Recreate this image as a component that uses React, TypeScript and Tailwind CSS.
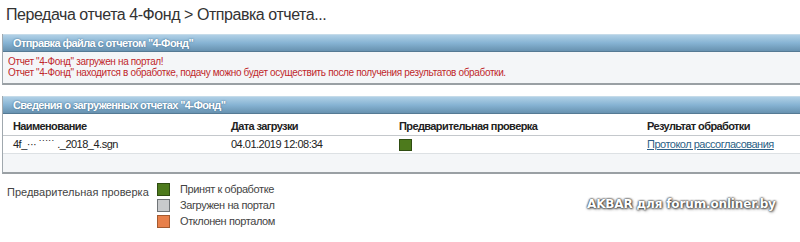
import React from 'react';

const body = { fontFamily: '"Liberation Sans", Arial, sans-serif' };

function PanelHeader({ children }: { children: React.ReactNode }) {
  return (
    <div className="h-[18px] flex items-center pl-[10px] bg-gradient-to-b from-[#b0d0e6] via-[#86b3d3] to-[#6892b0] border-b border-[#557a94] border-t border-t-[#c5dbe9]">
      <span
        className="text-[11px] font-bold text-white tracking-[-0.6px]"
        style={{ textShadow: '0 0 2px #3a6585' }}
      >
        {children}
      </span>
    </div>
  );
}

export default function App() {
  return (
    <div className="w-[800px] h-[242px] bg-white overflow-hidden relative" style={body}>
      <h1 className="text-[16px] leading-[22px] tracking-[-0.45px] text-[#333] pl-[6px] pt-[4px]">
        Передача отчета 4-Фонд &gt; Отправка отчета...
      </h1>

      {/* Panel 1 */}
      <div className="mt-[8px] ml-[2px] w-[820px] border-l border-[#a0a8ae] border-b-2 border-b-[#9aa0a4] bg-[#f4f6f8]">
        <PanelHeader>Отправка файла с отчетом "4-Фонд"</PanelHeader>
        <div className="pl-[5px] pt-[4px] pb-[5px] text-[10px] leading-[11px] tracking-[-0.35px] text-[#c0282c]">
          <div>Отчет "4-Фонд" загружен на портал!</div>
          <div>Отчет "4-Фонд" находится в обработке, подачу можно будет осуществить после получения результатов обработки.</div>
        </div>
      </div>

      {/* Panel 2 */}
      <div className="mt-[11px] ml-[2px] w-[820px] border-l border-[#a0a8ae] border-b-2 border-b-[#9aa0a4] bg-[#f4f6f8]">
        <PanelHeader>Сведения о загруженных отчетах "4-Фонд"</PanelHeader>
        <div className="bg-white">
          <div className="grid grid-cols-[218px_168px_248px_1fr] h-[22px] items-end pb-[1px] pl-[10px] border-b border-[#c4c8cc] text-[11px] font-bold tracking-[-0.6px] text-[#222]">
            <div>Наименование</div>
            <div>Дата загрузки</div>
            <div>Предварительная проверка</div>
            <div>Результат обработки</div>
          </div>
          <div className="grid grid-cols-[218px_168px_248px_1fr] h-[18px] items-center pl-[10px] border-b border-[#dde1e4] text-[11px] tracking-[-0.5px] text-[#222]">
            <div>4f_··· ˙˙˙˙˙ ._2018_4.sgn</div>
            <div>04.01.2019 12:08:34</div>
            <div>
              <div className="w-[13px] h-[12px] bg-[#4d7a1c] border border-[#2f4d12]" />
            </div>
            <div className="text-[#2c5f86] underline">Протокол рассогласования</div>
          </div>
        </div>
        <div className="h-[18px]" />
      </div>

      {/* Legend */}
      <div className="flex pl-[7px] pt-[9px] text-[11px] text-[#444]">
        <div className="w-[150px] pt-[1px]">Предварительная проверка</div>
        <div className="flex flex-col gap-[3px] tracking-[-0.4px]">
          {[
            ['bg-[#4d7a1c] border-[#2f4d12]', 'Принят к обработке'],
            ['bg-[#c8cacc] border-[#6f7478]', 'Загружен на портал'],
            ['bg-[#e8804a] border-[#a35a30]', 'Отклонен порталом'],
          ].map(([c, t]) => (
            <div key={t} className="flex items-center gap-[10px] h-[13px]">
              <div className={`w-[13px] h-[13px] border ${c}`} />
              <span>{t}</span>
            </div>
          ))}
        </div>
      </div>

      <div
        className="absolute left-[587px] top-[195px] text-[12px] font-bold text-white tracking-[-0.15px]"
        style={{
          fontFamily: '"DejaVu Sans", Verdana, sans-serif',
          textShadow: '0 0 2px #333, 0 0 2px #333, 1px 1px 3px #555',
        }}
      >
        AKBAR для forum.onliner.by
      </div>
    </div>
  );
}
